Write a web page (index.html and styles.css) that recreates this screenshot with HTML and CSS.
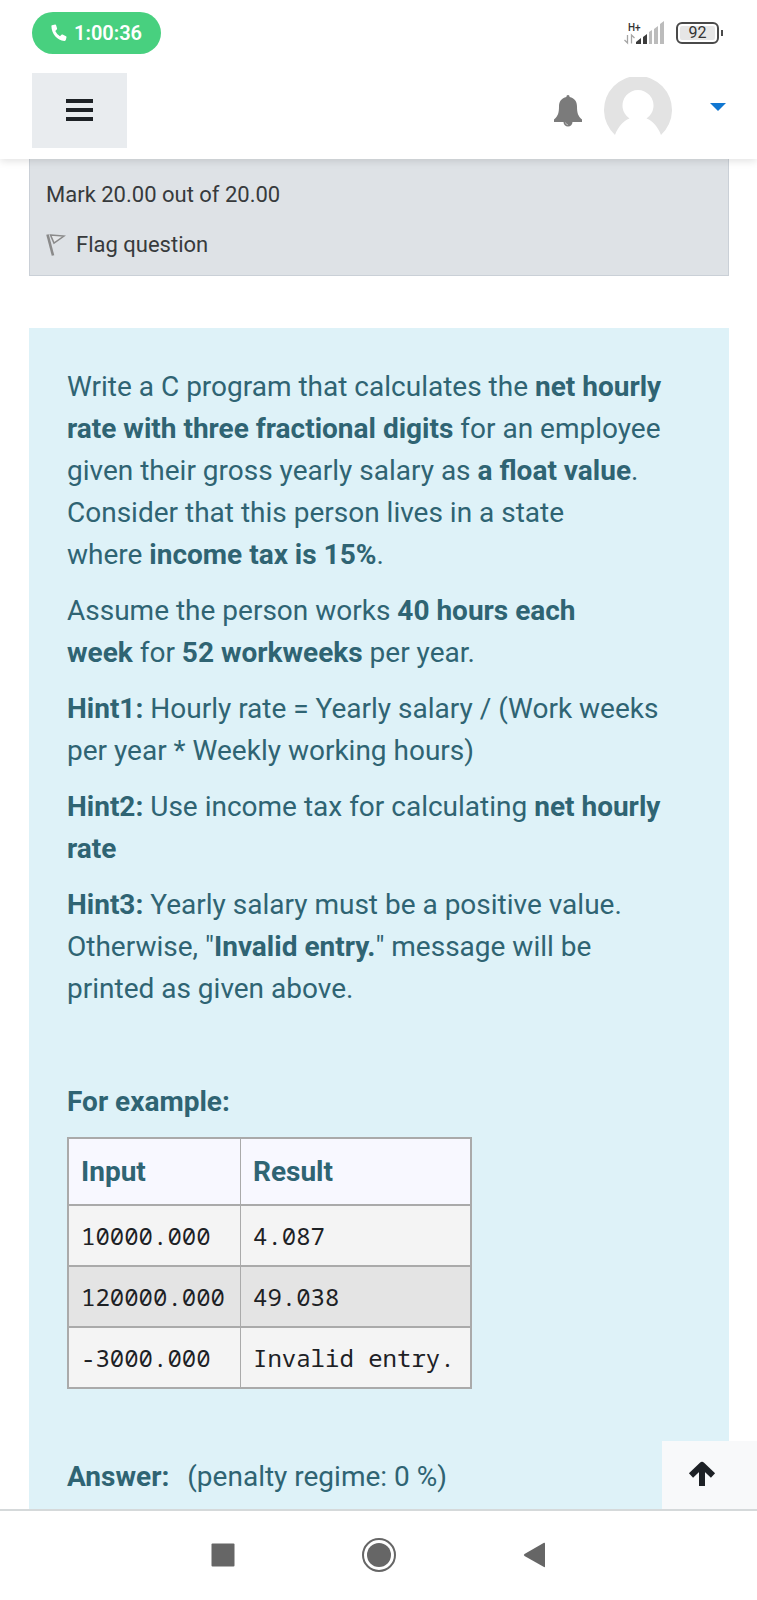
FILE: index.html
```
<!DOCTYPE html>
<html lang="en">
<head>
<meta charset="utf-8">
<meta name="viewport" content="width=device-width, initial-scale=1">
<title>Quiz question</title>
<link rel="stylesheet" href="styles.css">
</head>
<body>
<header class="top">
  <div class="status">
    <span class="call">
      <svg width="16" height="18" viewBox="0 0 16 18" aria-hidden="true"><path d="M1 1.2 4.1.4Q4.800.3 5 1L6.100 4.500Q6.200 5.200 5.700 5.600L4.300 6.900Q6 10.700 9 12.300L10.400 10.800Q10.900 10.300 11.600 10.600L15 12.200Q15.700 12.600 15.500 13.300L14.800 16Q14.600 16.800 13.700 16.900C6.500 17.200.4 9.500.4 2.100Q.4 1.400 1 1.200Z" fill="#fff"/></svg>
      1:00:36
    </span>
    <div class="indicators">
      <svg width="41" height="24" viewBox="0 0 41 24" role="img" aria-label="Mobile signal">
        <text x="4" y="10" class="net">H+</text>
        <path d="M3.500 14v8L.5 19M7.500 22.500V14l3 3" fill="none" stroke="#a5a5a5" stroke-width="1.300"/>
        <path d="M12 23v-2l5-4v6zM19 23v-7l4-3v10z" fill="#3c3c3c"/>
        <path d="M25 23V11l3-2v14zM30 23V8l4-3v18zM36 23V3l4-3v23z" fill="#bcbcbc"/>
      </svg>
      <span class="battery">92</span>
    </div>
  </div>
  <div class="bar">
    <button class="menu" type="button" aria-label="Menu">
      <svg width="27" height="24" viewBox="0 0 27 24"><path d="M0 0h27v4H0zM0 9h27v4H0zM0 18h27v4H0z" fill="#1d2125"/></svg>
    </button>
    <div class="user">
      <button class="plain" type="button" aria-label="Notifications">
        <svg width="30" height="32" viewBox="0 0 30 32"><path d="M15 0c1.100 0 1.600.8 1.600 2C21.500 3 24 6.500 24 11.500c0 6.500 1 9.500 5 13V27H1v-2.500c4-3.500 5-6.500 5-13C6 6.500 8.500 3 13.400 2c0-1.200.5-2 1.600-2zM10.500 27h9a4.500 4.500 0 0 1-9 0z" fill="#7b7b7b"/><path d="M12.500 27.500q.3 2.200 2.500 2.300" stroke="#bbb" fill="none"/></svg>
      </button>
      <svg class="avatar" width="68" height="68" viewBox="0 0 68 68" role="img" aria-label="User picture"><path d="M11 58A34 34 0 1 1 57 58C54 50 49 44 42.500 41.500A15.500 15.500 0 1 0 25.500 41.500C19 44 14 50 11 58Z" fill="#e3e3e3"/></svg>
      <button class="plain caret" type="button" aria-label="User menu">
        <svg width="16" height="8" viewBox="0 0 16 8"><path d="M0 0h16L8 8z" fill="#1177d1"/></svg>
      </button>
    </div>
  </div>
</header>

<main class="page">
  <section class="info">
    <div>Mark 20.00 out of 20.00</div>
    <a class="flag" href="#">
      <svg width="20" height="24" viewBox="0 0 20 24" aria-hidden="true"><path d="M1.500 1.500 7 22.500" stroke="#8a8a8a" stroke-width="2.600" fill="none"/><path d="M4.500 2 18 3 8 10z" stroke="#8a8a8a" stroke-width="1.500" fill="#e6e8ea"/></svg>
      Flag question
    </a>
  </section>

  <section class="question">
    <p>Write a C program that calculates the <b>net hourly rate with three fractional digits</b> for an employee given their gross yearly salary as <b>a float value</b>. Consider that this person lives in a state where&nbsp;<b>income tax is 15%</b>.</p>
    <p>Assume the person works <b>40 hours each week</b>&nbsp;for <b>52 workweeks</b> per year.</p>
    <p><b>Hint1:</b> Hourly rate = Yearly salary / (Work weeks per year * Weekly working hours)</p>
    <p><b>Hint2:</b> Use income tax for calculating <b>net hourly rate</b></p>
    <p><b>Hint3:</b> Yearly salary must be a positive value. Otherwise, "<b>Invalid entry.</b>" message will be printed as given above.</p>
    <h4 class="example">For example:</h4>
    <table class="tests">
      <thead><tr><th scope="col">Input</th><th scope="col">Result</th></tr></thead>
      <tbody>
        <tr><td>10000.000</td><td>4.087</td></tr>
        <tr><td>120000.000</td><td>49.038</td></tr>
        <tr><td>-3000.000</td><td>Invalid entry.</td></tr>
      </tbody>
    </table>
    <div class="answer"><b>Answer:</b><span>(penalty regime: 0 %)</span></div>
  </section>

  <button class="to-top" type="button" aria-label="Back to top">
    <svg width="28" height="28" viewBox="0 0 28 28"><path d="M3 14.500 14 4l11 10.500M14 5v20" fill="none" stroke="#1d2125" stroke-width="6" stroke-linejoin="round"/></svg>
  </button>
</main>

<nav class="keys">
  <button class="plain" type="button" aria-label="Recent apps"><svg width="24" height="24" viewBox="0 0 24 24"><rect x=".5" y=".5" width="23" height="23" rx="1" fill="#666"/></svg></button>
  <button class="plain" type="button" aria-label="Home"><svg width="34" height="34" viewBox="0 0 34 34"><circle cx="17" cy="17" r="16" fill="none" stroke="#666" stroke-width="2"/><circle cx="17" cy="17" r="12" fill="#666"/></svg></button>
  <button class="plain" type="button" aria-label="Back"><svg width="24" height="26" viewBox="0 0 24 26"><path d="M1.500 12 21 .8q1-.4 1 .7v23q0 1.100-1 .6L1.500 14q-1.400-1 0-2z" fill="#666"/></svg></button>
</nav>
</body>
</html>
```
FILE: styles.css
```
* { box-sizing: border-box; }

body {
  margin: 0;
  min-height: 100vh;
  display: flex;
  flex-direction: column;
  background: #fff;
  color: #373a3c;
  font-family: Roboto, "Liberation Sans", sans-serif;
  font-size: 28px;
  line-height: 42px;
}

svg { display: block; flex: none; }

button {
  border: 0;
  padding: 0;
  font: inherit;
}

.plain { background: none; }

.top {
  position: relative;
  z-index: 1;
  padding: 12px 31px 11px 32px;
  background: #fff;
  box-shadow: 0 2px 8px rgba(0, 0, 0, 0.12);
}

.status,
.bar,
.user,
.indicators {
  display: flex;
  align-items: center;
}

.status,
.bar { justify-content: space-between; }

.call {
  display: flex;
  align-items: center;
  gap: 7px;
  padding: 0 19px;
  border-radius: 21px;
  background: #48d07f;
  color: #fff;
  font-size: 20px;
  font-weight: 600;
}

.indicators {
  gap: 11px;
  padding-right: 7px;
}

.net {
  font-size: 10px;
  font-weight: 500;
  fill: #333;
}

.battery {
  position: relative;
  width: 43px;
  border: 2px solid #4a4a4a;
  border-radius: 6px;
  background: #e6e6e6;
  box-shadow: inset 0 0 0 2px #fff;
  color: #333;
  font-size: 16px;
  line-height: 18px;
  text-align: center;
}

.battery::after {
  content: "";
  position: absolute;
  top: 6px;
  right: -6px;
  width: 2px;
  height: 6px;
  background: #4a4a4a;
}

.bar { margin-top: 19px; }

.menu {
  display: flex;
  align-items: center;
  justify-content: center;
  width: 95px;
  height: 75px;
  background: #e9ecef;
}

.avatar { margin: 0 38px 0 21px; }

.caret { padding-bottom: 8px; }

.page {
  position: relative;
  flex: 1;
  display: flex;
  flex-direction: column;
  padding: 0 28px 0 29px;
}

.info {
  margin-bottom: 52px;
  padding: 19px 16px 14px;
  border: 1px solid #cad0d7;
  border-top: 0;
  background: #dee2e6;
  font-size: 22px;
  line-height: 33px;
}

.flag {
  display: flex;
  align-items: center;
  gap: 10px;
  margin-top: 17px;
  color: inherit;
  text-decoration: none;
}

.question {
  flex: 1;
  padding: 38px 48px 11px 38px;
  background: #def2f8;
  color: #2f6473;
}

.question p { margin: 0 0 14px; }

.example {
  margin: 71px 0 14px;
  font-size: 28px;
  font-weight: 700;
}

.tests {
  border: 2px solid #aaa;
  border-collapse: collapse;
}

.tests th,
.tests td {
  border: 1px solid #aaa;
  border-width: 2px 1px;
  padding: 0 15px 0 12px;
  text-align: left;
}

.tests th {
  height: 67px;
  background: #f8f8ff;
}

.tests td {
  height: 61px;
  background: #f4f4f4;
  color: #1d2125;
  font-family: "Noto Sans Mono", "DejaVu Sans Mono", monospace;
  font-size: 24px;
}

.tests tr:nth-child(even) td { background: #e4e4e4; }

.answer {
  display: flex;
  gap: 18px;
  margin-top: 67px;
}

.to-top {
  position: absolute;
  right: 0;
  bottom: 0;
  display: flex;
  align-items: center;
  justify-content: center;
  width: 95px;
  height: 68px;
  padding-right: 16px;
  background: #f8f9fa;
}

.keys {
  display: flex;
  align-items: center;
  justify-content: center;
  gap: 127px;
  height: 92px;
  padding-bottom: 2px;
  border-top: 2px solid #d5d9da;
  background: #fff;
}
```
